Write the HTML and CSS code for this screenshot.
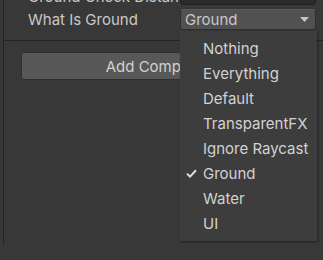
FILE: index.html
```html
<!DOCTYPE html>
<html lang="en">
<head>
    <meta charset="UTF-8">
    <meta name="viewport" content="width=device-width, initial-scale=1.0">
    <title>Inspector</title>
    <link rel="stylesheet" href="styles.css">
</head>
<body>
    <div class="inspector">
        <!-- Campos do componente -->
        <div class="component">
            <div class="row">
                <span class="label">Ground Check Distance</span>
                <div class="text-field">0.2</div>
            </div>
            <div class="row">
                <span class="label">What Is Ground</span>
                <div class="dropdown">
                    <span>Ground</span>
                    <svg class="arrow" width="9" height="5" viewBox="0 0 9 5"><path d="M0 0h9L4.5 5z" fill="#c4c4c4"/></svg>
                </div>
            </div>
        </div>

        <div class="add-area">
            <button class="add-btn">Add Component</button>
        </div>
    </div>

    <!-- Menu aberto do LayerMask -->
    <div class="menu">
        <div class="item">Nothing</div>
        <div class="item">Everything</div>
        <div class="item">Default</div>
        <div class="item">TransparentFX</div>
        <div class="item">Ignore Raycast</div>
        <div class="item checked">
            <svg class="check" width="11" height="9" viewBox="0 0 11 9"><path d="M1 4.6l3 3L10 1.2" fill="none" stroke="#e0e0e0" stroke-width="2"/></svg>
            Ground
        </div>
        <div class="item">Water</div>
        <div class="item">UI</div>
    </div>
</body>
</html>
```

FILE: styles.css
```css
/* Inspector escuro */
html, body {
    margin: 0;
    height: 100%;
}
body {
    background-color: #383838;
    font-family: Inter, "Noto Sans", sans-serif;
    font-size: 15px;
    color: #c8c8c8;
    overflow: hidden;
    position: relative;
}
.inspector {
    margin-left: 3px;
    height: 100%;
    border-left: 1px solid #232323;
}
.component {
    margin-top: -16px;
    padding: 0 7px 10px 24px;
    border-bottom: 1px solid #232323;
    display: flex;
    flex-direction: column;
    gap: 4px;
}
.row {
    display: flex;
    align-items: center;
    height: 21px;
}
.label {
    width: 152px;
    flex: none;
    white-space: nowrap;
    overflow: hidden;
    padding-top: 3px;
}
.row + .row .label {
    padding-top: 0;
}
.text-field {
    flex: 1;
    height: 19px;
    line-height: 19px;
    padding: 0 4px;
    background-color: #2a2a2a;
    border: 1px solid #212121;
    border-radius: 3px;
}
.dropdown {
    flex: 1;
    height: 19px;
    display: flex;
    align-items: center;
    justify-content: space-between;
    padding: 0 6px 0 4px;
    background-color: #515151;
    border: 1px solid #303030;
    border-top-color: #5a5a5a;
    border-radius: 3px;
}
.add-area {
    padding: 11px 17px 0 17px;
}
.add-btn {
    width: 100%;
    height: 28px;
    font-family: inherit;
    font-size: 15px;
    color: #d2d2d2;
    background-color: #585858;
    border: 1px solid #303030;
    border-radius: 3px;
}
.menu {
    position: absolute;
    left: 180px;
    top: 31px;
    width: 137px;
    padding: 5px 0;
    background-color: #3d3d3d;
    box-shadow: 1px 1px 2px rgba(0, 0, 0, 0.35);
    color: #d2d2d2;
}
.item {
    height: 25px;
    line-height: 25px;
    padding-left: 23px;
    position: relative;
    white-space: nowrap;
}
.check {
    position: absolute;
    left: 6px;
    top: 8px;
}
```
